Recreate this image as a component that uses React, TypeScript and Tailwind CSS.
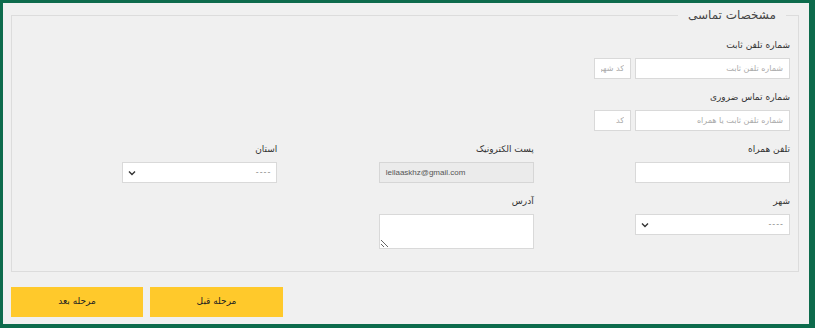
import React from 'react';

const font = { fontFamily: '"DejaVu Sans", "Noto Sans", sans-serif' };

function Label({ children }: { children: React.ReactNode }) {
  return <div className="h-[14px] mb-[6px] text-[9px] leading-[14px] text-[#333]">{children}</div>;
}

function Chevron() {
  return (
    <svg width="8" height="6" viewBox="0 0 8 6" className="shrink-0">
      <path d="M1 1.5 L4 4.5 L7 1.5" fill="none" stroke="#333" strokeWidth="1.4" />
    </svg>
  );
}

function Select() {
  return (
    <div className="w-[155px] h-[21px] bg-white border border-[#d9d9d9] flex items-center justify-between px-[5px]">
      <span className="text-[8px] text-[#888] tracking-[1px]">----</span>
      <Chevron />
    </div>
  );
}

function Input({ placeholder, w = 'w-[155px]' }: { placeholder?: string; w?: string }) {
  return (
    <input
      dir="rtl"
      placeholder={placeholder}
      className={`block ${w} h-[21px] bg-white border border-[#d9d9d9] px-[6px] text-[8px] placeholder:text-[#aaa] outline-none`}
      style={font}
    />
  );
}

export default function App() {
  return (
    <div
      className="w-[815px] h-[328px] bg-[#f0f0f0] border-t-[3px] border-l-[3px] border-r-[6px] border-b-[4px] border-[#0d6b4c] pl-[8px] pr-[10px]"
      style={font}
    >
      <fieldset dir="rtl" className="mt-[2px] border border-[#dcdcdc] pl-[9px] pr-[8px] pt-[13px] pb-[22px] min-w-0">
        <legend className="mr-[4px] px-[10px] text-[12px] leading-[20px] text-[#444]">مشخصات تماسی</legend>

        <div className="flex flex-col gap-[11px]">
          <div>
            <Label>شماره تلفن ثابت</Label>
            <div className="flex gap-[4px]">
              <Input placeholder="شماره تلفن ثابت" />
              <Input placeholder="کد شهر" w="w-[37px]" />
            </div>
          </div>

          <div>
            <Label>شماره تماس ضروری</Label>
            <div className="flex gap-[4px]">
              <Input placeholder="شماره تلفن ثابت یا همراه" />
              <Input placeholder="کد" w="w-[37px]" />
            </div>
          </div>

          <div className="grid grid-cols-3">
            <div>
              <Label>تلفن همراه</Label>
              <Input />
            </div>
            <div>
              <Label>پست الکترونیک</Label>
              <div
                dir="ltr"
                className="w-[155px] h-[21px] bg-[#ebebeb] border border-[#d6d6d6] px-[6px] flex items-center text-[8px] text-[#555]"
                style={{ fontFamily: '"Liberation Sans", sans-serif' }}
              >
                leilaaskhz@gmail.com
              </div>
            </div>
            <div>
              <Label>استان</Label>
              <Select />
            </div>
          </div>

          <div className="grid grid-cols-3">
            <div>
              <Label>شهر</Label>
              <Select />
            </div>
            <div>
              <Label>آدرس</Label>
              <textarea dir="rtl" className="block w-[155px] h-[35px] bg-white border border-[#d9d9d9] outline-none" />
            </div>
            <div />
          </div>
        </div>
      </fieldset>

      <div className="flex gap-[7px] mt-[15px]">
        <button className="w-[132px] h-[30px] bg-[#ffc92b] text-[9px] text-[#222]">مرحله بعد</button>
        <button className="w-[133px] h-[30px] bg-[#ffc92b] text-[9px] text-[#222]">مرحله قبل</button>
      </div>
    </div>
  );
}
